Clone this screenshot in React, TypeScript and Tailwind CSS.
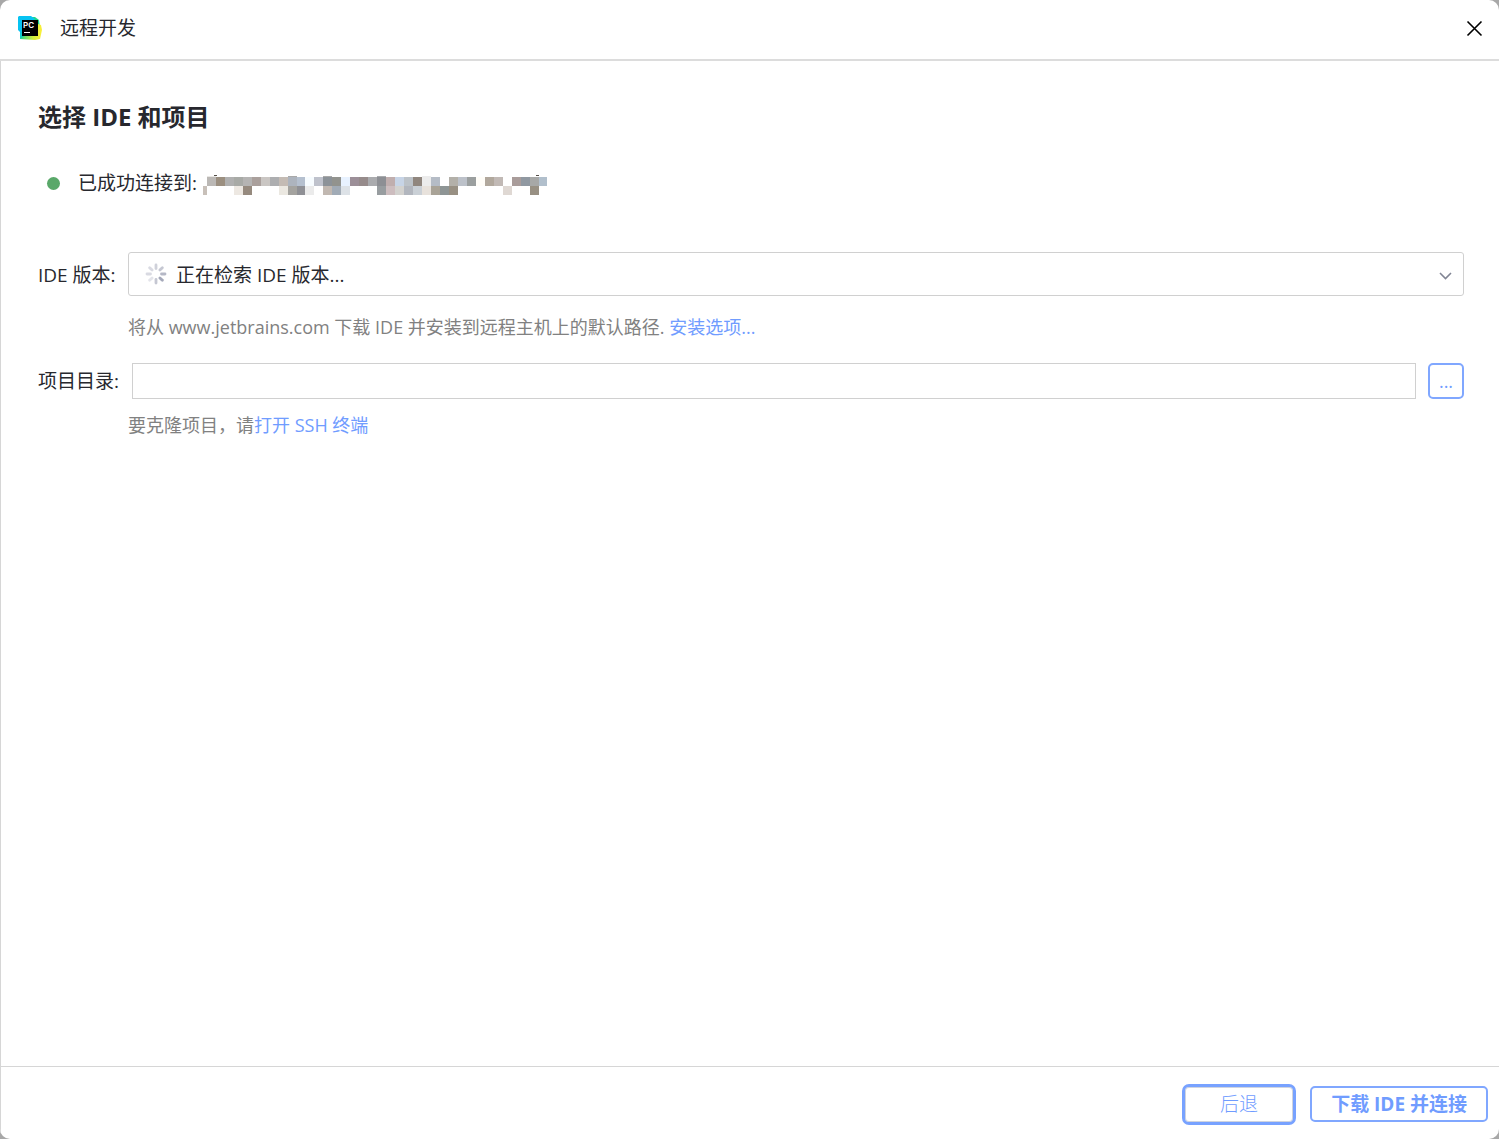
import { useState } from "react";

// [column, row, colour] cells that cover the host name
const HOST_CELLS: [number, number, string][] = [
  [0, 0, "#bbb8b5"],
  [1, 0, "#9b8f80"],
  [2, 0, "#b0b0b0"],
  [3, 0, "#a8aaa6"],
  [4, 0, "#b5b4b3"],
  [5, 0, "#aaa09c"],
  [6, 0, "#cac6c3"],
  [7, 0, "#adaeb0"],
  [8, 0, "#c4bbb4"],
  [9, 0, "#adb4be"],
  [10, 0, "#b5c0cf"],
  [11, 0, "#f7fcff"],
  [12, 0, "#bfc2cc"],
  [13, 0, "#8c9298"],
  [14, 0, "#92938e"],
  [15, 0, "#e8f2ff"],
  [16, 0, "#9c8f98"],
  [17, 0, "#968b8b"],
  [18, 0, "#aaabae"],
  [19, 0, "#8d8f94"],
  [20, 0, "#c0aeae"],
  [21, 0, "#c7d4e6"],
  [22, 0, "#bcc2c8"],
  [23, 0, "#90867e"],
  [24, 0, "#ececec"],
  [25, 0, "#b5bcc6"],
  [27, 0, "#b3b0a9"],
  [28, 0, "#bcc1c9"],
  [29, 0, "#9b9f9f"],
  [30, 0, "#fffdf8"],
  [31, 0, "#b1a89d"],
  [32, 0, "#c1b9b5"],
  [34, 0, "#a99c9a"],
  [35, 0, "#9098a1"],
  [36, 0, "#a7a8a7"],
  [37, 0, "#b1bfcc"],
  [3, 1, "#ede8e2"],
  [4, 1, "#968a7e"],
  [8, 1, "#ebe8e1"],
  [9, 1, "#a4a39f"],
  [10, 1, "#8f9095"],
  [11, 1, "#ebebeb"],
  [13, 1, "#c1b8b1"],
  [14, 1, "#a1abb6"],
  [15, 1, "#dde2e7"],
  [19, 1, "#989da0"],
  [20, 1, "#cdbdbf"],
  [21, 1, "#d3d2cf"],
  [22, 1, "#b2b6be"],
  [23, 1, "#cad0d6"],
  [24, 1, "#e8e2dc"],
  [25, 1, "#a9a397"],
  [26, 1, "#8e9595"],
  [27, 1, "#989083"],
  [33, 1, "#dfd8d3"],
  [36, 1, "#989083"],
];

const SPOKES = [
  { angle: 0, color: "#cfd1da" },
  { angle: 45, color: "#c5c7d2" },
  { angle: 90, color: "#b5b8c6" },
  { angle: 135, color: "#a5a9ba" },
  { angle: 180, color: "#c5c7d2" },
  { angle: 225, color: "#e3e4ea" },
  { angle: 270, color: "#d9dae2" },
  { angle: 315, color: "#d9dae2" },
];

function HostMask() {
  return (
    <svg
      className="ml-[6px] shrink-0"
      width="344"
      height="24"
      viewBox="0 0 344 24"
      shapeRendering="crispEdges"
      aria-hidden="true"
    >
      <rect x="0" y="15" width="4" height="9" fill="#c8c0b9" />
      <rect x="4" y="5" width="9" height="1" fill="#e9e7e4" />
      <rect x="85" y="5" width="9" height="1" fill="#a9a9a9" />
      <rect x="120" y="5" width="9" height="1" fill="#a9a9a9" />
      <rect x="174" y="5" width="9" height="1" fill="#a9abae" />
      <rect x="219" y="5" width="9" height="1" fill="#ececec" />
      <rect x="11" y="4" width="3" height="1" fill="#55504a" />
      <rect x="333" y="4" width="3" height="1" fill="#55504a" />
      {HOST_CELLS.map(([col, row, color]) => (
        <rect
          key={`${col}-${row}`}
          x={col * 9 + (col > 10 ? 3 : 4)}
          y={row * 9 + 6}
          width="9"
          height="9"
          fill={color}
        />
      ))}
    </svg>
  );
}

function PyCharmIcon() {
  return (
    <svg width="24" height="24" viewBox="0 0 24 24" aria-hidden="true">
      <defs>
        <linearGradient id="pc-blue" x1="0" y1="0" x2="0.6" y2="1">
          <stop offset="0.5" stopColor="#07c3f2" />
          <stop offset="1" stopColor="#21d789" />
        </linearGradient>
        <linearGradient id="pc-yellow" x1="0" y1="0" x2="1" y2="0">
          <stop offset="0" stopColor="#21d789" />
          <stop offset="0.6" stopColor="#d2f03c" />
          <stop offset="1" stopColor="#fcee39" />
        </linearGradient>
      </defs>
      <path d="M14 1 L17 1 L21 4 L22 12 L12 12 Z" fill="#21d789" />
      <path d="M20 8 L23 9 L24 14 L22 23 L17 24 L2 23 L3 16 Z" fill="url(#pc-yellow)" />
      <path d="M1 0 L13 0 L17 3 L6 20 L2 23 L2 16 L0 14 L0 1 Z" fill="url(#pc-blue)" />
      <rect x="4" y="4" width="16" height="16" fill="#000" />
      <text
        x="5"
        y="12"
        fill="#fff"
        fontSize="8"
        fontWeight="600"
        fontFamily="Inter, sans-serif"
      >
        PC
      </text>
      <rect x="6" y="16" width="6" height="1" fill="#fff" />
    </svg>
  );
}

function Spinner() {
  return (
    <svg
      className="pointer-events-none absolute left-[17px] top-[11px]"
      width="22"
      height="22"
      viewBox="0 0 22 22"
      aria-hidden="true"
    >
      {SPOKES.map(({ angle, color }) => (
        <line
          key={angle}
          x1="11"
          y1="2"
          x2="11"
          y2="5.5"
          stroke={color}
          strokeWidth="2.8"
          strokeLinecap="round"
          transform={`rotate(${angle} 11 11)`}
        />
      ))}
    </svg>
  );
}

export default function App() {
  const [directory, setDirectory] = useState("");

  return (
    <div className="min-h-screen bg-[#a8a8a8] font-['Open_Sans','Noto_Sans_CJK_SC',sans-serif] text-[#27282e]">
      <div className="flex min-h-screen flex-col overflow-hidden rounded-[10px] bg-white">
        {/* Title bar */}
        <header className="flex h-[61px] items-center border-b-2 border-[#dcdcdc] pl-[18px] pr-4 pb-[3px]">
          <PyCharmIcon />
          <span className="ml-[18px] text-[19px] leading-7">远程开发</span>
          <button type="button" aria-label="关闭" className="ml-auto">
            <svg width="17" height="17" viewBox="0 0 17 17" aria-hidden="true">
              <path d="M1.5 1.5 L15.5 15.5 M15.5 1.5 L1.5 15.5" stroke="#000" strokeWidth="1.6" />
            </svg>
          </button>
        </header>

        {/* Form */}
        <main className="flex-1 border-l border-[#d6d6d6] pl-[37px] pr-[35px] pt-10">
          <h1 className="text-2xl leading-8 font-bold">选择 IDE 和项目</h1>

          <div className="mt-[38px] flex h-6 items-center">
            <span className="ml-[9px] size-[13px] rounded-full bg-[#59a869]" />
            <span className="ml-[18px] text-[19px] leading-6">已成功连接到:</span>
            <HostMask />
          </div>

          <div className="mt-[57px] grid grid-cols-[90px_1fr] items-center">
            <label htmlFor="ide" className="pt-[2px] text-[19px] leading-7 whitespace-nowrap">
              IDE 版本:
            </label>
            <div className="relative">
              <select
                id="ide"
                className="h-11 w-full appearance-none rounded-[3px] border border-[#d0d0d0] bg-white pt-[2px] pl-[47px] text-[19px] outline-none"
              >
                <option>正在检索 IDE 版本...</option>
              </select>
              <Spinner />
              <svg
                className="pointer-events-none absolute right-3 top-5"
                width="13"
                height="9"
                viewBox="0 0 13 9"
                aria-hidden="true"
              >
                <path d="M1 1 L6.5 6.5 L12 1" fill="none" stroke="#818594" strokeWidth="1.6" />
              </svg>
            </div>

            <p className="col-start-2 mt-[17px] text-[18px] leading-7 text-[#818181]">
              将从 www.jetbrains.com 下载 IDE 并安装到远程主机上的默认路径.{" "}
              <a href="#options" className="text-[#709cff]">
                安装选项...
              </a>
            </p>

            <label htmlFor="dir" className="mt-[22px] text-[19px] leading-7 whitespace-nowrap">
              项目目录:
            </label>
            <div className="mt-[22px] flex gap-3 pl-1">
              <input
                id="dir"
                type="text"
                value={directory}
                onChange={(e) => setDirectory(e.target.value)}
                className="h-9 min-w-0 flex-1 border border-[#d0d0d0] bg-white px-2 text-[19px] outline-none"
              />
              <button
                type="button"
                aria-label="浏览"
                className="size-9 rounded-[5px] border-2 border-[#80a7ff] text-[18px] leading-7 text-[#709cff]"
              >
                ...
              </button>
            </div>

            <p className="col-start-2 mt-3 text-[18px] leading-7 text-[#818181]">
              要克隆项目，请
              <a href="#ssh" className="text-[#709cff]">
                打开 SSH 终端
              </a>
            </p>
          </div>
        </main>

        {/* Actions */}
        <footer className="flex h-[73px] items-center justify-end gap-[14px] border-t border-l border-[#d6d6d6] pt-[2px] pr-[11px] text-[19px] text-[#709cff]">
          <button
            type="button"
            className="h-[41px] w-[114px] rounded-[7px] border-3 border-[#78a2ff] font-light inset-ring inset-ring-[#d0d4de]"
          >
            后退
          </button>
          <button type="button" className="h-9 rounded-[5px] border-2 border-[#80a7ff] px-[19px] leading-7 font-bold">
            下载 IDE 并连接
          </button>
        </footer>
      </div>
    </div>
  );
}
